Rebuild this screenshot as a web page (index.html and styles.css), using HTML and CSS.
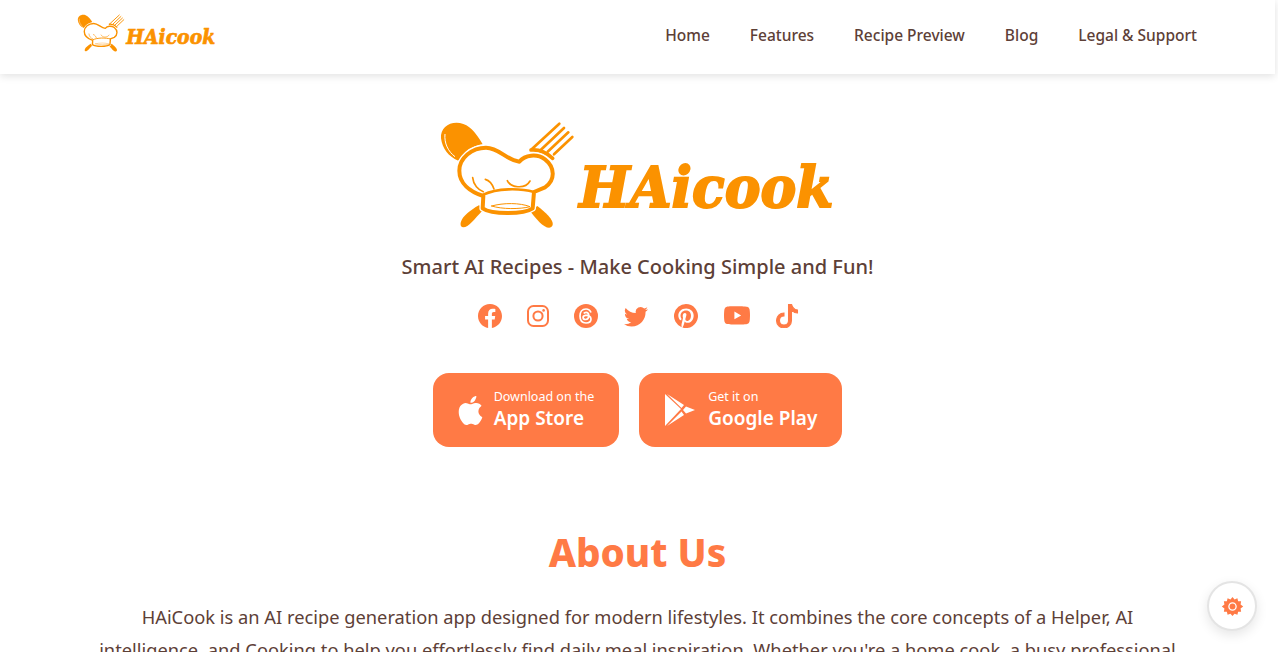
FILE: index.html
```html
<!DOCTYPE html>
<html lang="en">
<head>
    <meta charset="UTF-8">
    <meta name="viewport" content="width=device-width, initial-scale=1.0">
    <title>HAicook</title>
    <link rel="stylesheet" href="styles.css">
</head>
<body>
    <svg class="defs" width="0" height="0">
        <symbol id="logo" viewBox="0 0 1260 390" overflow="visible">
            <g fill="#fb9200">
                <path d="M33 85C30 50 65 30 100 42 125 50 145 80 158 103 125 108 105 125 85 152 55 140 37 115 33 85Z"/>
                <path d="M148 285L157 302C135 325 115 352 100 352 88 352 90 335 100 322 115 305 135 292 148 285Z"/>
                <path d="M322 288C345 305 372 330 368 345 362 360 345 352 330 338 315 322 305 310 300 303Z"/>
            </g>
            <g fill="none" stroke="#fb9200" stroke-width="8" stroke-linecap="round">
                <path d="M305 118L388 41"/>
                <path d="M332 120L402 54"/>
                <path d="M353 125L415 67"/>
                <path d="M372 133L427 81"/>
                <path d="M303 120C325 118 350 128 368 145" stroke-width="11"/>
            </g>
            <path d="M45 72C42 100 55 125 75 140" fill="none" stroke="#fff" stroke-width="3"/>
            <path d="M160 258C120 245 88 220 88 182 88 145 125 113 168 113 208 113 228 150 268 155 285 135 320 130 345 148 376 172 376 212 345 232L312 246 308 295C280 314 185 314 158 295Z" fill="#fff" stroke="#fff" stroke-width="20" stroke-linejoin="round"/>
            <path d="M160 258C120 245 88 220 88 182 88 145 125 113 168 113 208 113 228 150 268 155 285 135 320 130 345 148 376 172 376 212 345 232L312 246 308 295C280 314 185 314 158 295Z" fill="#fff" stroke="#fb9200" stroke-width="12" stroke-linejoin="round"/>
            <g fill="none" stroke="#fb9200" stroke-width="5" stroke-linecap="round">
                <path d="M160 254C200 234 270 234 312 246" stroke-width="8"/>
                <path d="M128 203C130 225 145 240 160 245"/>
                <path d="M166 208C180 212 188 225 192 237"/>
                <path d="M232 212C240 232 285 240 300 213"/>
                <path d="M185 288C220 278 270 278 300 290 270 298 215 298 185 288Z" stroke-width="3"/>
            </g>
            <text class="logo-text" x="448" y="290" textLength="762" lengthAdjust="spacingAndGlyphs">HAicook</text>
        </symbol>
    </svg>

    <header class="navbar">
        <svg class="nav-logo"><use href="#logo"/></svg>
        <nav class="nav-links">
            <a href="#">Home</a>
            <a href="#">Features</a>
            <a href="#">Recipe Preview</a>
            <a href="#">Blog</a>
            <a href="#">Legal &amp; Support</a>
        </nav>
    </header>

    <section class="hero">
        <svg class="hero-logo"><use href="#logo"/></svg>
        <p class="tagline">Smart AI Recipes - Make Cooking Simple and Fun!</p>
        <div class="socials">
            <svg class="social" viewBox="0 0 16 16"><path d="M16 8.049c0-4.446-3.582-8.05-8-8.05C3.58 0-.002 3.603-.002 8.05c0 4.017 2.926 7.347 6.75 7.951v-5.625h-2.03V8.05H6.75V6.275c0-2.017 1.195-3.131 3.022-3.131.876 0 1.791.157 1.791.157v1.98h-1.009c-.993 0-1.303.621-1.303 1.258v1.51h2.218l-.354 2.326H9.25V16c3.824-.604 6.75-3.934 6.75-7.951z"/></svg>
            <svg class="social" viewBox="0 0 24 24"><rect x="2" y="2" width="20" height="20" rx="5.5" fill="none" stroke="#ff7a45" stroke-width="2"/><circle cx="12" cy="12" r="4.6" fill="none" stroke="#ff7a45" stroke-width="2"/><circle cx="17.6" cy="6.4" r="1.3"/></svg>
            <svg class="social" viewBox="0 0 24 24"><circle cx="12" cy="12" r="12"/><path d="M17 8.5C16 6 14 5 12 5 8 5 6 8 6 12s2 7 6 7c3 0 5-1.600 5-4 0-3-3-4-5.500-3.600-1.700.3-2.500 1.200-2.400 2.300.1 1.200 1.300 1.900 2.700 1.800 2-.1 3-1.600 2.900-4.500-.1-1.700-1-2.700-2.600-2.700-1 0-1.800.4-2.300 1.200" fill="none" stroke="#fff" stroke-width="1.700"/></svg>
            <svg class="social social-far" viewBox="0 0 16 16"><path d="M5.026 15c6.038 0 9.341-5.003 9.341-9.334 0-.14 0-.282-.006-.422A6.685 6.685 0 0 0 16 3.542a6.658 6.658 0 0 1-1.889.518 3.301 3.301 0 0 0 1.447-1.817 6.533 6.533 0 0 1-2.087.793A3.286 3.286 0 0 0 7.875 6.03a9.325 9.325 0 0 1-6.767-3.429 3.289 3.289 0 0 0 1.018 4.382A3.323 3.323 0 0 1 .64 6.575v.045a3.288 3.288 0 0 0 2.632 3.218 3.203 3.203 0 0 1-.865.115 3.23 3.23 0 0 1-.614-.057 3.283 3.283 0 0 0 3.067 2.277A6.588 6.588 0 0 1 .78 13.58a6.32 6.32 0 0 1-.78-.045A9.344 9.344 0 0 0 5.026 15z"/></svg>
            <svg class="social social-far" viewBox="0 0 16 16"><path d="M8 0a8 8 0 0 0-2.915 15.452c-.07-.633-.134-1.606.027-2.297.146-.625.938-3.977.938-3.977s-.239-.479-.239-1.187c0-1.113.645-1.943 1.448-1.943.682 0 1.012.512 1.012 1.127 0 .686-.437 1.712-.663 2.663-.188.796.4 1.446 1.185 1.446 1.422 0 2.515-1.5 2.515-3.664 0-1.915-1.377-3.254-3.342-3.254-2.276 0-3.612 1.707-3.612 3.471 0 .688.265 1.425.595 1.826a.24.24 0 0 1 .056.23c-.061.252-.196.796-.222.907-.035.146-.116.177-.268.107-1-.465-1.624-1.926-1.624-3.1 0-2.523 1.834-4.84 5.286-4.84 2.775 0 4.932 1.977 4.932 4.62 0 2.757-1.739 4.976-4.151 4.976-.811 0-1.573-.421-1.834-.919l-.498 1.902c-.181.695-.669 1.566-.995 2.097A8 8 0 1 0 8 0z"/></svg>
            <svg class="social social-far social-wide" viewBox="0 0 16 16"><path d="M8.051 1.999h.089c.822.003 4.987.033 6.11.335a2.01 2.01 0 0 1 1.415 1.42c.101.38.172.883.22 1.402l.01.104.022.26.008.104c.065.914.073 1.77.074 1.957v.075c-.001.194-.01 1.108-.082 2.06l-.008.105-.009.104c-.05.572-.124 1.14-.235 1.558a2.007 2.007 0 0 1-1.415 1.42c-1.16.312-5.569.334-6.18.335h-.142c-.309 0-1.587-.006-2.927-.052l-.17-.006-.087-.004-.171-.007-.171-.007c-1.11-.049-2.167-.128-2.654-.26a2.007 2.007 0 0 1-1.415-1.419c-.111-.417-.185-.986-.235-1.558L.09 9.82l-.008-.104A31.4 31.4 0 0 1 0 7.68v-.123c.002-.215.01-.958.064-1.778l.007-.103.003-.052.008-.104.022-.26.01-.104c.048-.519.119-1.023.22-1.402a2.007 2.007 0 0 1 1.415-1.42c.487-.13 1.544-.21 2.654-.26l.17-.007.172-.006.086-.003.171-.007A99.788 99.788 0 0 1 7.858 2h.193zM6.4 5.209v4.818l4.157-2.408L6.4 5.209z"/></svg>
            <svg class="social social-tiktok" viewBox="0 0 16 16"><path d="M9 0h1.98c.144.715.54 1.617 1.235 2.512C12.895 3.389 13.797 4 15 4v2c-1.753 0-3.07-.814-4-1.829V11a5 5 0 1 1-5-5v2a3 3 0 1 0 3 3V0Z"/></svg>
        </div>
        <div class="stores">
            <a class="store-btn" href="#">
                <svg class="store-icon" viewBox="0 0 16 16"><path d="M11.182.008C11.148-.03 9.923.023 8.857 1.18c-1.066 1.156-.902 2.482-.878 2.516.024.034 1.52.087 2.475-1.258.955-1.345.762-2.391.728-2.43zm3.314 11.733c-.048-.096-2.325-1.234-2.113-3.422.212-2.189 1.675-2.789 1.698-2.854.023-.065-.597-.79-1.254-1.157a3.692 3.692 0 0 0-1.563-.434c-.108-.003-.483-.095-1.254.116-.508.139-1.653.589-1.968.607-.316.018-1.256-.522-2.267-.665-.647-.125-1.333.131-1.824.328-.49.196-1.422.754-2.074 2.237-.652 1.482-.311 3.83-.067 4.56.244.729.625 1.924 1.273 2.796.576.984 1.34 1.667 1.659 1.899.319.232 1.219.386 1.843.067.502-.308 1.408-.485 1.766-.472.357.013 1.061.154 1.782.539.571.197 1.111.115 1.652-.105.541-.221 1.324-1.059 2.238-2.758.347-.79.505-1.217.473-1.282z"/></svg>
                <span class="store-text"><small>Download on the</small><strong>App Store</strong></span>
            </a>
            <a class="store-btn" href="#">
                <svg class="store-icon store-icon-play" viewBox="0 0 30 32"><path d="M0 0L16 15 0 32ZM2 0L19 11 16.500 14ZM2 32L19 21 16.500 17.500ZM21 12.500L30 16 21 19.500 18 16Z"/></svg>
                <span class="store-text"><small>Get it on</small><strong>Google Play</strong></span>
            </a>
        </div>
    </section>

    <section class="about">
        <h2>About Us</h2>
        <p>HAiCook is an AI recipe generation app designed for modern lifestyles. It combines the core concepts of a Helper, AI intelligence, and Cooking to help you effortlessly find daily meal inspiration. Whether you're a home cook, a busy professional</p>
    </section>

    <button class="settings-btn" type="button" aria-label="Settings">
        <svg viewBox="0 0 24 24"><path fill-rule="evenodd" d="M12 0l2.600 3 3.600-1.500.9 3.800 3.800.2-.7 3.900L25.500 12l-3.300 2.600.7 3.900-3.800.2-.9 3.800-3.600-1.500L12 24l-2.600-3-3.600 1.500-.9-3.800-3.800-.2.7-3.900L-1.500 12l3.300-2.600-.7-3.900 3.800-.2.9-3.800 3.600 1.500ZM12 6.600a5.400 5.400 0 1 0 0 10.800 5.400 5.400 0 0 0 0-10.800Z"/><circle cx="12" cy="12" r="3.700"/></svg>
    </button>
</body>
</html>
```

FILE: styles.css
```css
html, body {
    height: 100%;
    overflow: hidden;
}
body {
    font-family: 'Noto Sans', 'Open Sans', sans-serif;
    margin: 0;
    padding: 0 3px 0 0;
    box-sizing: border-box;
    background-color: #fff;
    color: #5d4037;
}
.defs {
    display: block;
    height: 0;
}
.logo-text {
    font-family: 'DejaVu Serif', serif;
    font-size: 170px;
    font-weight: 700;
    font-style: italic;
    fill: #fb9200;
    stroke: #fb9200;
    stroke-width: 6px;
}
.navbar {
    height: 74px;
    display: flex;
    align-items: center;
    justify-content: space-between;
    padding: 0 78px 0 74px;
    background: #fff;
    box-shadow: 0 2px 8px rgba(0, 0, 0, 0.12);
}
.nav-logo {
    width: 147px;
    height: 46px;
    margin-top: -9px;
}
.nav-links {
    display: flex;
    gap: 40px;
    margin-top: -5px;
}
.nav-links a {
    color: #5d4037;
    font-size: 15.5px;
    font-weight: 500;
    text-decoration: none;
}
.hero {
    display: flex;
    flex-direction: column;
    align-items: center;
    padding-top: 36px;
}
.hero-logo {
    width: 420px;
    height: 130px;
    margin-left: 5px;
}
.tagline {
    font-size: 20px;
    font-weight: 500;
    margin: 13px 0 0;
}
.socials {
    display: flex;
    align-items: center;
    gap: 24px;
    margin-top: 23px;
    padding-left: 2px;
}
.social {
    width: 24px;
    height: 24px;
    fill: #ff7a45;
}
.social-far {
    margin-left: 2px;
}
.social-wide {
    width: 26px;
    height: 26px;
}
.social-tiktok {
    margin-left: 1px;
    stroke: #ff7a45;
    stroke-width: 0.7px;
}
.stores {
    display: flex;
    gap: 20px;
    margin-top: 44px;
}
.store-btn {
    display: flex;
    align-items: center;
    height: 74px;
    box-sizing: border-box;
    padding: 0 25px;
    border-radius: 16px;
    background-color: #ff7a45;
    color: #fff;
    text-decoration: none;
}
.store-icon {
    width: 29px;
    height: 29px;
    margin: 0 9px 0 -2px;
    fill: #fff;
}
.store-icon-play {
    width: 30px;
    height: 32px;
    margin: 0 13px 0 1px;
}
.store-text {
    display: flex;
    flex-direction: column;
}
.store-text small {
    font-size: 12.5px;
    line-height: 17px;
}
.store-text strong {
    font-size: 19px;
    font-weight: 600;
    line-height: 27px;
}
.about {
    text-align: center;
    padding: 0 90px;
    margin-top: 80px;
}
.about h2 {
    color: #ff7a45;
    font-size: 38.6px;
    font-weight: 800;
    line-height: 50px;
    margin: 0 0 23px;
}
.about p {
    font-size: 18.3px;
    line-height: 33px;
    margin: 0;
}
.settings-btn {
    position: fixed;
    right: 21px;
    bottom: 21px;
    width: 50px;
    height: 50px;
    padding: 0;
    display: flex;
    align-items: center;
    justify-content: center;
    border: 2px solid #e4e4e4;
    border-radius: 50%;
    background: #fff;
    box-shadow: 0 4px 12px rgba(0, 0, 0, 0.1);
}
.settings-btn svg {
    width: 19px;
    height: 19px;
    fill: #ff7a45;
    overflow: visible;
}
```
